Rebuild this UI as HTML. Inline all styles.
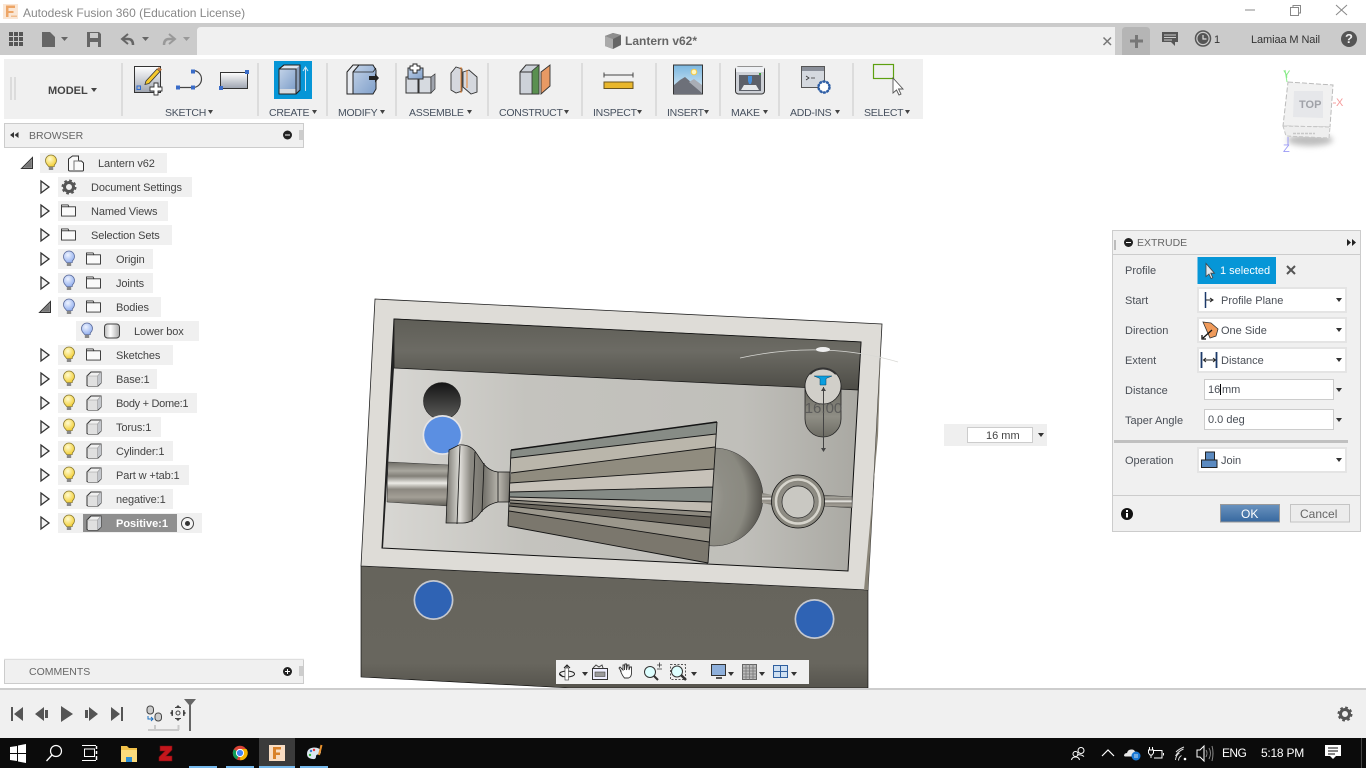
<!DOCTYPE html>
<html><head><meta charset="utf-8"><title>Autodesk Fusion 360</title>
<style>
html,body{margin:0;padding:0;width:1366px;height:768px;overflow:hidden;background:#fff;font-family:"Liberation Sans",sans-serif}
svg.m{position:absolute;left:0;top:0}
.t{position:absolute;white-space:nowrap;font-size:11px;line-height:14px;color:#4a4f57;margin-top:1px}
.tb{color:#46505e;font-size:10.5px;letter-spacing:-.25px}
.b{color:#444;letter-spacing:-.12px}
</style></head><body>
<svg class="m" width="1366" height="768" viewBox="0 0 1366 768" xmlns="http://www.w3.org/2000/svg">
<defs>
<linearGradient id="gW" x1="0" y1="0" x2="0" y2="1"><stop offset="0" stop-color="#fff"/><stop offset="1" stop-color="#9ea4b0"/></linearGradient>
<linearGradient id="gB" x1="0" y1="0" x2="1" y2="1"><stop offset="0" stop-color="#c3d3e8"/><stop offset="1" stop-color="#7f9fca"/></linearGradient>
<linearGradient id="gBk" x1="0" y1="0" x2="0" y2="1"><stop offset="0" stop-color="#5f5e57"/><stop offset=".45" stop-color="#6c6b64"/><stop offset="1" stop-color="#4d4c46"/></linearGradient>
<linearGradient id="gF" x1="0" y1="0" x2="1" y2="0"><stop offset="0" stop-color="#d8d7d3"/><stop offset=".3" stop-color="#c4c3be"/><stop offset=".75" stop-color="#c0bfba"/><stop offset="1" stop-color="#a9a8a2"/></linearGradient>
<linearGradient id="gFr" x1="0" y1="0" x2="0" y2="1"><stop offset="0" stop-color="#66645c"/><stop offset=".8" stop-color="#68665e"/><stop offset="1" stop-color="#56544d"/></linearGradient>
<linearGradient id="gRod" x1="0" y1="0" x2="0" y2="1"><stop offset="0" stop-color="#6f6d66"/><stop offset=".2" stop-color="#a9a79f"/><stop offset=".32" stop-color="#827f78"/><stop offset=".48" stop-color="#ecebe6"/><stop offset=".62" stop-color="#8b8880"/><stop offset=".8" stop-color="#a39f96"/><stop offset="1" stop-color="#5f5d56"/></linearGradient>
<linearGradient id="gFl" x1="0" y1="0" x2="1" y2="0"><stop offset="0" stop-color="#77756e"/><stop offset=".22" stop-color="#dfded9"/><stop offset=".38" stop-color="#8d8b84"/><stop offset=".6" stop-color="#77756e"/><stop offset=".82" stop-color="#b9b6ae"/><stop offset="1" stop-color="#77756e"/></linearGradient>
<radialGradient id="gD" cx=".12" cy=".5" r=".88"><stop offset="0" stop-color="#d0cabb"/><stop offset=".28" stop-color="#a8a69e"/><stop offset=".55" stop-color="#8f8e86"/><stop offset=".8" stop-color="#8a8980"/><stop offset="1" stop-color="#54524c"/></radialGradient>
<linearGradient id="gH" x1="0" y1="0" x2="0" y2="1"><stop offset="0" stop-color="#141414"/><stop offset="1" stop-color="#5e5e5c"/></linearGradient>
<linearGradient id="gC" x1="0" y1="0" x2="0" y2="1"><stop offset="0" stop-color="#66655d"/><stop offset=".6" stop-color="#8f8e85"/><stop offset="1" stop-color="#6c6b63"/></linearGradient>
<linearGradient id="gOK" x1="0" y1="0" x2="0" y2="1"><stop offset="0" stop-color="#6a93bf"/><stop offset="1" stop-color="#37689f"/></linearGradient>
<radialGradient id="gBulbY" cx=".4" cy=".35" r=".7"><stop offset="0" stop-color="#fffbd0"/><stop offset="1" stop-color="#f2cc2e"/></radialGradient>
<radialGradient id="gBulbB" cx=".4" cy=".35" r=".7"><stop offset="0" stop-color="#eef3ff"/><stop offset="1" stop-color="#8fadee"/></radialGradient>
<linearGradient id="gCyl" x1="0" y1="0" x2="1" y2="0"><stop offset="0" stop-color="#bbb"/><stop offset=".4" stop-color="#fff"/><stop offset="1" stop-color="#aaa"/></linearGradient>
<linearGradient id="gSky" x1="0" y1="0" x2="0" y2="1"><stop offset="0" stop-color="#7bb7e0"/><stop offset="1" stop-color="#dfeef7"/></linearGradient>
<filter id="bl" x="-30%" y="-100%" width="160%" height="300%"><feGaussianBlur stdDeviation="3"/></filter>
<symbol id="bulbY" viewBox="0 0 12 16" overflow="visible"><path d="M2.5 10C.8 8.500.5 6.500.5 5.500a5.200 5.200 0 0 1 11 0c0 1.500-.7 3-2.200 4.500v1.500H3.500z" fill="url(#gBulbY)" stroke="#8a7a30" stroke-width=".8"/><path d="M3.800 12h4.400v3H3.800z" fill="#888"/></symbol>
<symbol id="bulbB" viewBox="0 0 12 16" overflow="visible"><path d="M2.500 10C.8 8.500.5 6.500.5 5.500a5.200 5.200 0 0 1 11 0c0 1.500-.7 3-2.200 4.500v1.500H3.500z" fill="url(#gBulbB)" stroke="#5a6a9a" stroke-width=".8"/><path d="M3.800 12h4.400v3H3.800z" fill="#888"/></symbol>
<symbol id="fold" viewBox="0 0 16 14" overflow="visible"><path d="M.5 13V1h7l1 2h7v10z" fill="#fafafa" stroke="#333"/><path d="M.5 3h8" stroke="#333" fill="none"/></symbol>
<symbol id="cube" viewBox="0 0 16 16" overflow="visible"><path d="M1 14.500V5L5 1h10v11l-3 3H2z" fill="#f0f0f0" stroke="#333"/><path d="M1.500 5h10v10H2z" fill="#e0e0e0"/><path d="M11.500 5l3.500-4v11l-3.500 3z" fill="#c4c7cc"/><path d="M1 5h10.500L15 1M11.500 5v10" fill="none" stroke="#999" stroke-width=".6"/></symbol>
<symbol id="tri" viewBox="0 0 10 14" overflow="visible"><path d="M1 1l8 6-8 6z" fill="#f4f4f4" stroke="#333" stroke-width="1.300"/></symbol>
<symbol id="triO" viewBox="0 0 12 12" overflow="visible"><path d="M11.500 .5v11H.5z" fill="#9a9a9a" stroke="#333"/><path d="M10.500 3v7.500H3z" fill="#777"/></symbol>
</defs>

<!-- title bar -->
<rect x="0" y="0" width="1366" height="23" fill="#fff"/>
<rect x="3" y="4" width="15" height="15" fill="#fae6d4"/>
<path d="M6 5.500h9v2.500H8.500v3h5V13h-5v4H6z" fill="#eda566"/><path d="M11 15.500h6v1.500h-6z" fill="#f0bd8f"/>
<path d="M1245 10h10" stroke="#888"/><path d="M1290.500 7.500h8v8h-8z" fill="none" stroke="#888"/><path d="M1293 7V5.500h7.500v7.500H1299" fill="none" stroke="#888"/>
<path d="M1336 5l11 10M1347 5l-11 10" stroke="#888"/>

<!-- tabs -->
<rect x="0" y="23" width="1366" height="32" fill="#cbcbcb"/>
<path d="M197 55V31q0-4 4-4h914v28z" fill="#f0f0f0"/>
<path d="M1122 55V31q0-4 4-4h20q4 0 4 4v24z" fill="#b5b5b5"/>
<path d="M1130 41h13M1136.500 35v13" stroke="#777" stroke-width="3"/>
<path d="M1103.500 37.500l7.500 7.500M1111 37.500l-7.500 7.500" stroke="#777" stroke-width="1.500"/>
<g fill="#555"><rect x="9" y="32" width="4" height="4"/><rect x="14" y="32" width="4" height="4"/><rect x="19" y="32" width="4" height="4"/><rect x="9" y="37" width="4" height="4"/><rect x="14" y="37" width="4" height="4"/><rect x="19" y="37" width="4" height="4"/><rect x="9" y="42" width="4" height="4"/><rect x="14" y="42" width="4" height="4"/><rect x="19" y="42" width="4" height="4"/></g>
<path d="M42 32h8l5 5v10H42z" fill="#666"/><path d="M61 37h7l-3.500 4z" fill="#666"/>
<path d="M87 32h12l2 2v13H87z" fill="#666"/><rect x="90" y="33" width="8" height="5" fill="#cbcbcb"/><rect x="90" y="42" width="8" height="5" fill="#cbcbcb"/>
<path d="M128 34l-6 5 6 5" fill="none" stroke="#666" stroke-width="2"/><path d="M122 39h6q5 0 5 6" fill="none" stroke="#666" stroke-width="2.500"/><path d="M142 37h7l-3.500 4z" fill="#666"/>
<path d="M169 34l6 5-6 5" fill="none" stroke="#999" stroke-width="2"/><path d="M175 39h-6q-5 0-5 6" fill="none" stroke="#999" stroke-width="2.500"/><path d="M183 37h7l-3.500 4z" fill="#999"/>
<path d="M605 36l8-3 8 2v10l-8 4-8-3z" fill="#666"/><path d="M605 36l8 3 8-4-8-2z" fill="#8f8f8f"/><path d="M613 39v10l-8-3V36z" fill="#aaa"/>
<path d="M1162 32h16v10h-3v4l-4-4h-9z" fill="#555"/><path d="M1164 35h12M1164 37.500h12M1164 40h8" stroke="#cbcbcb"/>
<circle cx="1203" cy="38.500" r="7.500" fill="#cbcbcb" stroke="#555" stroke-width="1.500"/><circle cx="1203" cy="38.500" r="5.500" fill="#555"/><path d="M1203 35v4h3.500" fill="none" stroke="#ddd" stroke-width="1.200"/>
<circle cx="1349" cy="39" r="8" fill="#555"/>

<!-- 3D model -->
<polygon points="361,566 868,590 868,688 570,688 361,677" fill="url(#gFr)" stroke="#000" stroke-width=".6"/>
<polygon points="375,299 882,324 868,590 361,566" fill="#dedcd7" stroke="#222" stroke-width=".8"/>
<polygon points="881,342 868,590 864,590 878,436" fill="#8a8578"/>
<polygon points="394,319 861,342 848,571 382,548" fill="url(#gF)" stroke="#111"/>
<polygon points="394,319 861,342 858,390 394,368" fill="url(#gBk)" stroke="#111" stroke-width=".7"/>
<polygon points="394,319 394,368 383,548 382,548" fill="#222"/>
<circle cx="442" cy="401" r="18.500" fill="url(#gH)" stroke="#222" stroke-width=".6"/>
<circle cx="442.500" cy="435" r="20" fill="#e4e4e6"/><circle cx="442.500" cy="435" r="18.300" fill="#5b8fe2"/>
<!-- rod -->
<polygon points="388,462 449,465 448,506 387,502" fill="url(#gRod)" stroke="#333" stroke-width=".5"/>
<!-- flange -->
<path d="M449 450l10-5 q12-1 18 9l6 9q6 8 15 9h12v30h-12q-10 2-17 10-8 11-18 11h-17z" fill="url(#gFl)" stroke="#111" stroke-width=".7"/>
<path d="M460 446l-3 78M475 452l-3 70M484 463l-2 49M498 472v30" stroke="#111" stroke-width=".8" fill="none"/>
<!-- dome -->
<circle cx="714" cy="497" r="49" fill="url(#gD)" stroke="#333" stroke-width=".5"/>
<!-- cone -->
<polygon points="511,450 717,422 716,434 511,458" fill="#878c86"/>
<polygon points="511,458 716,434 715,447 511,473" fill="#bab6ab"/>
<polygon points="511,473 715,447 714,469 510,483" fill="#908c7f"/>
<polygon points="510,483 714,469 713,487 510,492" fill="#c7c2b9"/>
<polygon points="510,492 713,487 712,502 510,497" fill="#848a85"/>
<polygon points="510,497 712,502 711,512 510,500" fill="#c0bbb1"/>
<polygon points="510,500 711,512 711,517 510,503" fill="#8f8b81"/>
<polygon points="510,503 711,517 710,528 509,506" fill="#6a665d"/>
<polygon points="509,506 710,528 709,542 509,511" fill="#9b978c"/>
<polygon points="509,511 709,542 708,563 508,526" fill="#7b776d"/>
<g stroke="#151515" stroke-width=".9" fill="none"><path d="M511 450L717 422M511 458L716 434M511 473L715 447M510 483L714 469M510 492L713 487M510 497L712 502M510 500L711 512M510 503L711 517M509 506L710 528M509 511L709 542M508 526L708 563M511 450L508 526M717 422L708 563"/><path d="M511 450L717 422" stroke-width="1.500"/></g>
<!-- ring -->
<polygon points="762,493 773,495 773,505 762,503" fill="url(#gRod)"/>
<polygon points="823,495 852,497 852,508 823,506" fill="url(#gRod)" stroke="#333" stroke-width=".4"/>
<circle cx="798" cy="501.500" r="26.500" fill="#8a887f" stroke="#111" stroke-width=".8"/>
<circle cx="798" cy="501.500" r="22" fill="none" stroke="#d6d4cc" stroke-width="2.500"/>
<circle cx="798" cy="501.500" r="18" fill="none" stroke="#8e8c84" stroke-width="3"/>
<circle cx="798" cy="502" r="16" fill="#c9c8c2" stroke="#222" stroke-width=".7"/>
<!-- cylinder preview -->
<path d="M805 386v33a18 18 0 0 0 36 0v-33z" fill="url(#gC)" stroke="#222" stroke-width=".8"/>
<circle cx="823" cy="386" r="18" fill="#d1cfc9" stroke="#222" stroke-width=".8"/>
<path d="M810 374a18 18 0 0 1 26 0" stroke="#333" stroke-width="2" fill="none"/>
<path d="M814 376h18l-6 2.500v6.500h-6v-6.500z" fill="#0a9fe0" stroke="#046" stroke-width=".5"/>
<path d="M740 358Q823 340 898 362" fill="none" stroke="#d8d8d4" stroke-width=".7"/>
<ellipse cx="823" cy="349.500" rx="7" ry="2.500" fill="#eee"/>
<path d="M823.500 387v64" stroke="#444"/><path d="M821 391l2.500-4 2.500 4zM821 448l2.500 4 2.500-4z" fill="#444"/>
<text x="823.500" y="413" font-family="Liberation Sans" font-size="15" fill="#555" text-anchor="middle" opacity=".85">16.00</text>
<!-- bottom holes -->
<circle cx="433.500" cy="600" r="20" fill="#c5c8cf"/><circle cx="433.500" cy="600" r="18.300" fill="#2f63b4"/>
<circle cx="814.500" cy="619" r="20" fill="#c5c8cf"/><circle cx="814.500" cy="619" r="18.300" fill="#2f63b4"/>

<!-- toolbar -->
<rect x="4" y="59" width="919" height="60" fill="#f0f0f0"/>
<path d="M11 77v23M15 77v23" stroke="#c8c8c8"/>
<g fill="#dcdcdc"><rect x="121" y="63" width="2" height="53"/><rect x="257" y="63" width="2" height="53"/><rect x="326" y="63" width="2" height="53"/><rect x="395" y="63" width="2" height="53"/><rect x="487" y="63" width="2" height="53"/><rect x="581" y="63" width="2" height="53"/><rect x="655" y="63" width="2" height="53"/><rect x="719" y="63" width="2" height="53"/><rect x="778" y="63" width="2" height="53"/><rect x="852" y="63" width="2" height="53"/></g>
<!-- sketch -->
<rect x="134.500" y="66.500" width="26" height="26" fill="url(#gW)" stroke="#333"/><rect x="137" y="86" width="3.500" height="3.500" fill="none" stroke="#2e6bd0"/>
<path d="M146 81l11-12 3 2.500-11 12-4 1z" fill="#f6c92d" stroke="#333" stroke-width=".8"/><path d="M157 69l2-2 3 2.500-2 2z" fill="#c07a45"/>
<path d="M154 83h4v4h4v4h-4v4h-4v-4h-4v-4h4z" fill="#fff" stroke="#333" stroke-width=".9"/>
<path d="M178 87.500h15a8.500 8.500 0 0 0 0-17" fill="none" stroke="#444" stroke-width="1.200"/>
<g fill="#3a6cc8"><rect x="176" y="85.500" width="4" height="4"/><rect x="191" y="85.500" width="4" height="4"/><rect x="191" y="69.500" width="4" height="4"/></g>
<rect x="220.500" y="72.500" width="27" height="16" fill="url(#gW)" stroke="#333"/><rect x="245" y="70" width="4" height="4" fill="#3a6cc8"/><rect x="219" y="86" width="4" height="4" fill="#3a6cc8"/>
<!-- create -->
<rect x="274" y="61" width="38" height="38" fill="#0696d7"/>
<path d="M279 69l5-4h16v25l-4 4h-17z" fill="#dfe6ef" stroke="#333"/><path d="M279 69h17v20h-17z" fill="url(#gB)"/><path d="M296 69l4-4v25l-4 4z" fill="#8aa0bd"/><path d="M279 89h17v5h-17z" fill="#d5d9df"/><path d="M279 69l5-4h16v25l-4 4h-17zM279 69h17v25" fill="none" stroke="#222"/>
<path d="M305.500 91V68M303 71l2.500-4 2.500 4" stroke="#cfe6f4" fill="none" stroke-width="1"/>
<!-- modify -->
<path d="M347 72l6-7h10v29h-16z" fill="#e8ebf0" stroke="#222"/><path d="M353 72l6-7h14l3 5v19l-3 5h-20z" fill="url(#gB)" stroke="#222"/><path d="M353 72h20l3-4" fill="none" stroke="#222" stroke-width=".8"/>
<path d="M369 76h6v-2.500l4 4.500-4 4.500v-2.500h-6z" fill="#222"/>
<!-- assemble -->
<rect x="406" y="77" width="12" height="16" fill="#d6dae0" stroke="#333"/><rect x="419" y="77" width="12" height="16" fill="#d6dae0" stroke="#333"/><path d="M431 77l4-3v15l-4 4z" fill="#a0a5ae" stroke="#333" stroke-width=".7"/>
<path d="M408 68h15v11h-15z" fill="url(#gB)" stroke="#333"/><path d="M423 68v11" stroke="#333"/>
<path d="M410 66h3v-2h4v2h3v4h-3v3h-4v-3h-3z" fill="#fff" stroke="#222" stroke-width=".9"/>
<path d="M451 73l5-6 6 2v22l-6 2-5-3zM463 72l6-2 8 7v15l-6 2-8-7z" fill="#d5d8de" stroke="#333" stroke-width=".9"/><path d="M461 67v26M467 70v18" stroke="#e87a1e" stroke-width=".9" fill="none"/>
<!-- construct -->
<path d="M520 72l6-7h13v29h-19z" fill="#cdd2d9" stroke="#333"/><path d="M532 71l7-6v29h-7z" fill="#5a9050" stroke="#333" stroke-width=".8"/><path d="M520 72h12" stroke="#333"/>
<path d="M541 72l9-7v21l-9 8z" fill="#e89a64" stroke="#333" stroke-width=".9"/>
<!-- inspect -->
<path d="M604 72.500v5M633 72.500v5M604 75h29" stroke="#444" fill="none"/>
<rect x="604" y="82" width="29" height="6.500" fill="#e9b72c" stroke="#6a5520"/>
<!-- insert -->
<rect x="673.500" y="65" width="29" height="29" fill="url(#gSky)" stroke="#333"/><circle cx="694" cy="72" r="2.800" fill="#fff6c0" stroke="#f2c94c"/>
<path d="M674 94V85l6-5 5-3 7 6 10 10v1z" fill="#6d7079"/><path d="M689 82l5-3 8 6v8z" fill="#a9adb5"/>
<!-- make -->
<rect x="735.500" y="67" width="29" height="27" rx="3" fill="#cdd0d6" stroke="#333"/><rect x="736" y="67" width="28" height="5" fill="#eef0f3"/><rect x="739" y="75" width="22" height="16" fill="#5c6069"/><rect x="759" y="73" width="2" height="2" fill="#3a9a3a"/>
<path d="M748 76h4v5l-1 3h-2l-1-3z" fill="#4a90d9"/><path d="M741 90l3-5h12l3 5z" fill="#e6e8ea"/>
<!-- add-ins -->
<rect x="801.500" y="66.500" width="23" height="21" fill="#d5d9df" stroke="#555"/><rect x="802" y="67" width="22" height="4" fill="#8a8f99"/>
<path d="M806 76l3 2-3 2M811 78h4" stroke="#333" fill="none" stroke-width=".8"/>
<circle cx="824" cy="87" r="5.500" fill="#fff" stroke="#2f5fa6" stroke-width="2.500" stroke-dasharray="2.500 1"/><circle cx="824" cy="87" r="5.500" fill="none" stroke="#2f5fa6" stroke-width="1"/>
<!-- select -->
<rect x="873.500" y="64.500" width="20" height="14" fill="none" stroke="#5da010" stroke-width="1.200"/>
<path d="M893 78v15l3.500-3 2.500 5 2-1-2.500-5h4.500z" fill="#fff" stroke="#555" stroke-width=".9"/>
<!-- drops -->
<g fill="#444"><path d="M91 88h6l-3 4zM208 110h5l-2.500 4zM312 110h5l-2.500 4zM380 110h5l-2.500 4zM467 110h5l-2.500 4zM564 110h5l-2.500 4zM637 110h5l-2.500 4zM704 110h5l-2.500 4zM763 110h5l-2.500 4zM835 110h5l-2.500 4zM905 110h5l-2.500 4z"/></g>

<!-- browser -->
<rect x="4.500" y="123.500" width="299" height="24" fill="#f0f0f0" stroke="#ccc"/>
<path d="M10 135l4-3v6zM14.500 135l4-3v6z" fill="#333"/>
<circle cx="287.500" cy="135" r="4.500" fill="#222"/><path d="M285 135h5" stroke="#fff"/><path d="M300 130v10M302 130v10" stroke="#aaa"/>

<!-- rows -->
<g fill="#f0f0f0">
<rect x="40" y="153" width="127" height="20"/><rect x="58" y="177" width="134" height="20"/><rect x="58" y="201" width="110" height="20"/><rect x="58" y="225" width="114" height="20"/><rect x="58" y="249" width="95" height="20"/><rect x="58" y="273" width="95" height="20"/><rect x="58" y="297" width="103" height="20"/><rect x="76" y="321" width="123" height="20"/><rect x="58" y="345" width="115" height="20"/><rect x="58" y="369" width="99" height="20"/><rect x="58" y="393" width="139" height="20"/><rect x="58" y="417" width="103" height="20"/><rect x="58" y="441" width="115" height="20"/><rect x="58" y="465" width="131" height="20"/><rect x="58" y="489" width="115" height="20"/><rect x="58" y="513" width="144" height="20"/>
</g>
<rect x="83" y="514" width="94" height="18" fill="#8f8f8f"/>
<use href="#triO" x="21" y="157" width="12" height="12"/>
<use href="#triO" x="39" y="301" width="12" height="12"/>
<use href="#tri" x="40" y="180" width="10" height="14"/><use href="#tri" x="40" y="204" width="10" height="14"/><use href="#tri" x="40" y="228" width="10" height="14"/><use href="#tri" x="40" y="252" width="10" height="14"/><use href="#tri" x="40" y="276" width="10" height="14"/><use href="#tri" x="40" y="348" width="10" height="14"/><use href="#tri" x="40" y="372" width="10" height="14"/><use href="#tri" x="40" y="396" width="10" height="14"/><use href="#tri" x="40" y="420" width="10" height="14"/><use href="#tri" x="40" y="444" width="10" height="14"/><use href="#tri" x="40" y="468" width="10" height="14"/><use href="#tri" x="40" y="492" width="10" height="14"/><use href="#tri" x="40" y="516" width="10" height="14"/>
<use href="#bulbY" x="45" y="155" width="12" height="16"/>
<use href="#bulbB" x="63" y="251" width="12" height="16"/><use href="#bulbB" x="63" y="275" width="12" height="16"/><use href="#bulbB" x="63" y="299" width="12" height="16"/><use href="#bulbB" x="81" y="323" width="12" height="16"/>
<use href="#bulbY" x="63" y="347" width="12" height="16"/><use href="#bulbY" x="63" y="371" width="12" height="16"/><use href="#bulbY" x="63" y="395" width="12" height="16"/><use href="#bulbY" x="63" y="419" width="12" height="16"/><use href="#bulbY" x="63" y="443" width="12" height="16"/><use href="#bulbY" x="63" y="467" width="12" height="16"/><use href="#bulbY" x="63" y="491" width="12" height="16"/><use href="#bulbY" x="63" y="515" width="12" height="16"/>
<!-- lantern component icon -->
<path d="M68.500 170v-11l4-3h6v5h3l2 2v7q0 1-1 1H70q-1.500 0-1.500-1z" fill="#fafafa" stroke="#333"/><path d="M74 170v-9h5" fill="none" stroke="#777"/>
<!-- gear -->
<circle cx="69" cy="187" r="4.500" fill="none" stroke="#555" stroke-width="3"/><circle cx="69" cy="187" r="6.500" fill="none" stroke="#555" stroke-width="2" stroke-dasharray="2.700 2.400"/>
<use href="#fold" x="61" y="204" width="15" height="13"/><use href="#fold" x="61" y="228" width="15" height="13"/>
<use href="#fold" x="86" y="252" width="15" height="13"/><use href="#fold" x="86" y="276" width="15" height="13"/><use href="#fold" x="86" y="300" width="15" height="13"/><use href="#fold" x="86" y="348" width="15" height="13"/>
<rect x="104.500" y="324" width="15" height="14" rx="3" fill="url(#gCyl)" stroke="#444"/>
<use href="#cube" x="86" y="371" width="16" height="16"/><use href="#cube" x="86" y="395" width="16" height="16"/><use href="#cube" x="86" y="419" width="16" height="16"/><use href="#cube" x="86" y="443" width="16" height="16"/><use href="#cube" x="86" y="467" width="16" height="16"/><use href="#cube" x="86" y="491" width="16" height="16"/><use href="#cube" x="86" y="515" width="16" height="16"/>
<circle cx="187.500" cy="523.500" r="6" fill="#f4f4f4" stroke="#444"/><circle cx="187.500" cy="523.500" r="2.500" fill="#333"/>

<!-- view cube -->
<ellipse cx="1310" cy="140" rx="23" ry="6" fill="#888" opacity=".55" filter="url(#bl)"/>
<polygon points="1288,82 1333,85 1330,127 1283,126" fill="#f1f1f1" stroke="#bbb" stroke-dasharray="5 2"/>
<polygon points="1283,126 1330,127 1329,138 1286,136" fill="#eeeeee" stroke="#c5c5c5" stroke-dasharray="4 2"/>
<polygon points="1294,91 1323,91 1323,118 1293,117" fill="#e6e7ea"/>
<path d="M1293 133.500h22" stroke="#c8c8c8" stroke-width="1.500" stroke-dasharray="3 1"/>
<path d="M1285 70l2 12" stroke="#8ef08e"/><path d="M1288 137v8" stroke="#9a9af5"/><path d="M1333 103h3" stroke="#f5a0a0"/>

<!-- extrude panel -->
<rect x="1112.500" y="230.500" width="248" height="301" fill="#f0f0f0" stroke="#ccc"/>
<path d="M1112 254.500h249M1112 495.500h249" stroke="#ccc"/>
<path d="M1115 240v10" stroke="#888"/>
<circle cx="1128.500" cy="242.500" r="4.500" fill="#222"/><path d="M1126 242.500h5" stroke="#fff"/>
<path d="M1347 239l4 3.500-4 3.500zM1352 239l4 3.500-4 3.500z" fill="#222"/>
<rect x="1197.500" y="257" width="78.500" height="27" fill="#0696d7"/>
<path d="M1206 263.500v13l3-2.500 2 4.500 1.800-.8-2-4.500h3.700z" fill="#dfe8ee" stroke="#444" stroke-width=".8"/>
<path d="M1287 266l8 8M1295 266l-8 8" stroke="#555" stroke-width="2"/>
<g fill="#fff" stroke="#e4e4e4" stroke-width="2">
<rect x="1198" y="288" width="148" height="24"/><rect x="1198" y="318" width="148" height="24"/><rect x="1198" y="348" width="148" height="24"/><rect x="1198" y="448" width="148" height="24"/>
</g>
<g fill="#fff" stroke="#ccc"><rect x="1204.500" y="379.500" width="129" height="20"/><rect x="1204.500" y="409.500" width="129" height="20"/></g>
<path d="M1220.500 384v11" stroke="#000"/>
<g fill="#333"><path d="M1336 298h6l-3 4zM1336 328h6l-3 4zM1336 358h6l-3 4zM1336 388h6l-3 4zM1336 418h6l-3 4zM1336 458h6l-3 4z"/></g>
<rect x="1114" y="440" width="234" height="3" fill="#c0c0c0"/>
<!-- start icon -->
<path d="M1205.500 292v16" stroke="#1c3a6a" stroke-width="1.500"/><path d="M1206 300h6M1210 298l3 2-3 2" stroke="#222" fill="none"/>
<!-- direction -->
<path d="M1203 322l8 1 7 6-2 7-6 2z" fill="#ef9a5a" stroke="#333" stroke-width=".8"/><path d="M1212 330l-9 8M1202 335v4h4" stroke="#111" stroke-width="1.300" fill="none"/>
<!-- extent -->
<path d="M1201.500 352v16M1216.500 352v16" stroke="#1c3a6a" stroke-width="1.800"/><path d="M1204 360h11M1206 358l-2.500 2 2.500 2M1213 358l2.500 2-2.500 2" stroke="#222" fill="none"/>
<!-- join -->
<rect x="1205.500" y="452" width="9" height="8" fill="#5b8ac0" stroke="#222"/><rect x="1201.500" y="460" width="15.500" height="7.500" fill="#5b8ac0" stroke="#222"/>
<circle cx="1127" cy="514" r="6" fill="#111"/><rect x="1126" y="513" width="2" height="4.500" fill="#fff"/><rect x="1126" y="510" width="2" height="2" fill="#fff"/>
<rect x="1220.500" y="504.500" width="59" height="17.500" fill="url(#gOK)" stroke="#999"/>
<rect x="1290.500" y="504.500" width="59" height="17.500" fill="#ececec" stroke="#c4c4c4"/>

<!-- distance float -->
<rect x="944" y="424" width="103" height="22" fill="#efefef"/><rect x="967.500" y="427.500" width="65" height="15" fill="#fff" stroke="#ccc"/><path d="M1038 433h6l-3 4z" fill="#333"/>

<!-- view toolbar -->
<rect x="556" y="660" width="253" height="24" fill="#f0f0f0"/>
<path d="M567 665v13M564 668l3-3 3 3" stroke="#222" fill="none"/><ellipse cx="567" cy="674" rx="7.500" ry="3" fill="none" stroke="#222"/><path d="M560 674l3 3" stroke="#222"/><rect x="565" y="668" width="3.500" height="12" fill="#fff" stroke="#333" stroke-width=".6"/>
<path d="M582 672h6l-3 4zM691 672h6l-3 4zM728 672h6l-3 4zM759 672h6l-3 4zM791 672h6l-3 4z" fill="#333"/>
<rect x="592.500" y="668.500" width="15" height="11" fill="#eef" stroke="#333"/><rect x="595" y="672" width="10" height="4.500" fill="#9a9a9a" stroke="#444" stroke-width=".6"/><path d="M593 668l3-3 3 2 3-2 1 3" fill="none" stroke="#444"/>
<path d="M621 671l-2-3 1-1 3 3v-5h1.500v5l.5-6h1.500v6l1-5h1.500v5l1-3h1.500v6q0 4-3 5h-4q-2-2-4-7z" fill="#fff" stroke="#333" stroke-width=".9"/>
<circle cx="650" cy="672" r="5.500" fill="#dff" stroke="#333"/><path d="M654 676l4 4" stroke="#333" stroke-width="2"/><path d="M657 665h5M659.500 662.500v5M657 669h5" stroke="#333" fill="none" stroke-width=".8"/>
<rect x="670.500" y="664.500" width="15" height="15" fill="none" stroke="#555" stroke-dasharray="2 1.500"/><circle cx="677" cy="671.500" r="5.500" fill="#dff" stroke="#333"/><path d="M681 675l5 5" stroke="#333" stroke-width="2.500"/>
<rect x="711.500" y="664.500" width="14" height="11" fill="#8eb0dc" stroke="#333"/><path d="M716 678h6" stroke="#555" stroke-width="2"/>
<rect x="742.500" y="664.500" width="14" height="15" fill="#bbb" stroke="#666"/><path d="M742 668h15M742 671h15M742 674h15M742 677h15M746 664v16M749.500 664v16M753 664v16" stroke="#777" stroke-width=".8"/>
<rect x="773.500" y="665.500" width="14" height="12" fill="#cfe0f2" stroke="#2f5f9f"/><path d="M773 671.500h15M780.500 665v13" stroke="#2f5f9f"/>

<!-- comments -->
<rect x="4.500" y="659.500" width="299" height="24" fill="#f0f0f0" stroke="#ccc"/>
<path d="M4 659h300" stroke="#f0f0f0"/>
<circle cx="287.500" cy="671.500" r="4.500" fill="#222"/><path d="M285 671.500h5M287.500 669v5" stroke="#fff"/><path d="M300 666v10M302 666v10" stroke="#aaa"/>

<!-- timeline -->
<rect x="0" y="688" width="1366" height="50" fill="#f0f0f0"/><rect x="0" y="688" width="1366" height="2" fill="#cdcdcd"/>
<g fill="#555">
<rect x="11" y="707" width="2" height="14"/><path d="M23 707v14l-9-7z"/>
<path d="M35 714l9-7v14zM45 710h3v8h-3z"/>
<path d="M61 706l12 8-12 8z"/>
<path d="M85 710h3v8h-3zM89 707l9 7-9 7z"/>
<path d="M111 707l9 7-9 7z"/><rect x="121" y="707" width="2" height="14"/>
</g>
<rect x="147" y="706" width="6.500" height="8" rx="3" fill="#ccc" stroke="#444"/><rect x="155" y="713" width="6.500" height="8" rx="3" fill="#ccc" stroke="#444"/><path d="M148 716v3h5M151 717l2 2-2 2" stroke="#1a6fc0" fill="none"/>
<path d="M148 730h31M155 725v5M178.500 725v5" stroke="#c9c9c9" stroke-width="2" fill="none"/>
<circle cx="178" cy="713" r="2" fill="none" stroke="#444"/><g fill="#444"><path d="M178 705l3 3h-6zM178 721l3-3h-6zM170 713l3-3v6zM186 713l-3-3v6z"/></g>
<path d="M172 710v6M184 710v6M175 707.500h6M175 718.500h6" stroke="#444"/>
<path d="M184 699h12l-5 6v26h-2v-26z" fill="#666"/>
<circle cx="1345" cy="714" r="4.500" fill="none" stroke="#555" stroke-width="3"/><circle cx="1345" cy="714" r="6.500" fill="none" stroke="#555" stroke-width="2" stroke-dasharray="2.700 2.400"/>

<!-- taskbar -->
<rect x="0" y="738" width="1366" height="30" fill="#0b0b0b"/>
<rect x="259" y="738" width="36" height="30" fill="#3b3b3b"/>
<g fill="#76b9ed"><rect x="189" y="766" width="28" height="2"/><rect x="226" y="766" width="28" height="2"/><rect x="259" y="766" width="36" height="2"/><rect x="300" y="766" width="28" height="2"/></g>
<path d="M10 747l7-1v7h-7zM18 745.500l8-1.500v9h-8zM10 754h7v7l-7-1zM18 754h8v9l-8-1.500z" fill="#fff"/>
<circle cx="56" cy="751" r="5.500" fill="none" stroke="#fff" stroke-width="1.200"/><path d="M52 755l-5.500 6" stroke="#fff" stroke-width="1.300"/>
<path d="M82 745.500h14M82 760.500h14M84.500 749h10v7.500h-10z" fill="none" stroke="#fff"/><path d="M96.500 746v3M96.500 751v3M96.500 756v4" stroke="#fff" stroke-width="1.500"/>
<path d="M121 746h6l2 2h8v14h-16z" fill="#f1c14a"/><path d="M121 750h16v12h-16z" fill="#fbdb7c"/><path d="M126 757h6v5h-6z" fill="#2b8fd6"/>
<path d="M160 746h12v4l-6 6h6v5h-13v-4l6-6h-5z" fill="#c4161c" stroke="#7a0c10" stroke-width=".6"/>
<circle cx="240" cy="753" r="7.200" fill="#db4437"/><path d="M240 753l-6.200-3.600a7.200 7.200 0 0 0 3 10.100z" fill="#0f9d58"/><path d="M240 749h6.500a7.200 7.200 0 0 1-6.300 11.200z" fill="#f4b400"/><circle cx="240" cy="753" r="3.600" fill="#4285f4" stroke="#fff" stroke-width="1"/>
<rect x="269" y="745" width="16" height="16" fill="#f9ddc3"/><path d="M273 747h8v2.500h-5v3h4V755h-4v4h-3z" fill="#d9822b"/>
<path d="M307 754q0-6 7-6.500 6 0 7 4 0 3-3 3-2 0-2 2 0 3-3 2.500-6-.5-6-5z" fill="#dbe6f0"/><circle cx="311" cy="751" r="1.200" fill="#3a7fd0"/><circle cx="314" cy="750" r="1.200" fill="#e33"/><circle cx="310" cy="755" r="1.200" fill="#3b3"/><path d="M319 755l2.500-10" stroke="#e8912d" stroke-width="2"/>
<circle cx="1081" cy="750.500" r="3" fill="none" stroke="#fff"/><circle cx="1075.500" cy="754" r="2.500" fill="none" stroke="#fff"/><path d="M1071.500 760q.5-3 4-3t4 3M1077 755q4-1 7 1.500" fill="none" stroke="#fff"/>
<path d="M1102 756l6-6 6 6" fill="none" stroke="#fff" stroke-width="1.200"/>
<path d="M1124 756q0-3 3-3 1-4 5-3.500 2 0 3 2 3 0 3 3 0 2-2 2h-10q-2 0-2-1z" fill="#e8e8e8"/><circle cx="1136" cy="756" r="4.500" fill="#1a78d4"/><path d="M1134 755h4M1134 757h4" stroke="#fff" stroke-width=".8"/>
<path d="M1149.500 747v3M1152.500 747v3M1148.500 750h5v3l-1.500 2h-2l-1.500-2z" fill="none" stroke="#fff"/><path d="M1151 755v3" stroke="#fff"/><path d="M1154 750.500h8v7.500h-8" fill="none" stroke="#fff"/><path d="M1163.500 753v2.500" stroke="#fff"/>
<path d="M1175.500 760q.5-5 4-7M1178.500 760.500q0-3 3-5M1175.500 756q3-5 8-7M1176 752q3-3 8-5" fill="none" stroke="#ddd"/><circle cx="1185" cy="759" r="1.300" fill="#fff"/>
<path d="M1197 750h3l4-4v15l-4-4h-3z" fill="none" stroke="#fff"/><path d="M1206 750q2 3 0 7M1209 748q3 5 0 11M1212 746q2 7 0 15" fill="none" stroke="#888"/>
<path d="M1325 745h16v11h-5l-3 3-3-3h-5z" fill="#fff"/><path d="M1328 748h10M1328 751h10M1328 754h7" stroke="#0b0b0b"/>
<path d="M1361.500 738v30" stroke="#444"/>
</svg>

<span class="t" style="left:23px;top:5px;font-size:12px;color:#888">Autodesk Fusion 360 (Education License)</span>
<span class="t" style="left:625px;top:33px;font-size:12px;font-weight:bold;color:#666">Lantern v62*</span>
<span class="t" style="left:1214px;top:32px;color:#333">1</span>
<span class="t" style="left:1251px;top:32px;color:#333;letter-spacing:-.1px">Lamiaa M Nail</span>
<span class="t" style="left:1345px;top:31px;font-size:13px;font-weight:bold;color:#eee">?</span>

<span class="t" style="left:48px;top:83px;font-weight:bold;color:#444">MODEL</span>
<span class="t tb" style="left:165px;top:105px">SKETCH</span>
<span class="t tb" style="left:269px;top:105px">CREATE</span>
<span class="t tb" style="left:338px;top:105px">MODIFY</span>
<span class="t tb" style="left:409px;top:105px">ASSEMBLE</span>
<span class="t tb" style="left:499px;top:105px">CONSTRUCT</span>
<span class="t tb" style="left:593px;top:105px">INSPECT</span>
<span class="t tb" style="left:667px;top:105px">INSERT</span>
<span class="t tb" style="left:731px;top:105px">MAKE</span>
<span class="t tb" style="left:790px;top:105px">ADD-INS</span>
<span class="t tb" style="left:864px;top:105px">SELECT</span>

<span class="t" style="left:29px;top:128px;font-size:10.500px;color:#666">BROWSER</span>
<span class="t" style="left:29px;top:664px;font-size:10.500px;color:#666">COMMENTS</span>

<span class="t b" style="left:98px;top:156px">Lantern v62</span>
<span class="t b" style="left:91px;top:180px">Document Settings</span>
<span class="t b" style="left:91px;top:204px">Named Views</span>
<span class="t b" style="left:91px;top:228px">Selection Sets</span>
<span class="t b" style="left:116px;top:252px">Origin</span>
<span class="t b" style="left:116px;top:276px">Joints</span>
<span class="t b" style="left:116px;top:300px">Bodies</span>
<span class="t b" style="left:134px;top:324px">Lower box</span>
<span class="t b" style="left:116px;top:348px">Sketches</span>
<span class="t b" style="left:116px;top:372px">Base:1</span>
<span class="t b" style="left:116px;top:396px;letter-spacing:-.3px">Body + Dome:1</span>
<span class="t b" style="left:116px;top:420px">Torus:1</span>
<span class="t b" style="left:116px;top:444px">Cylinder:1</span>
<span class="t b" style="left:116px;top:468px">Part w +tab:1</span>
<span class="t b" style="left:116px;top:492px">negative:1</span>
<span class="t" style="left:116px;top:516px;font-weight:bold;color:#fff">Positive:1</span>

<span class="t" style="left:1299px;top:97px;font-size:11px;font-weight:bold;color:#a0a2a8">TOP</span>
<span class="t" style="left:1336px;top:95px;font-size:11px;color:#f59a9a">X</span>
<span class="t" style="left:1283px;top:67px;font-size:11px;color:#86e886">Y</span>
<span class="t" style="left:1283px;top:141px;font-size:11px;color:#9a9af5">Z</span>

<span class="t" style="left:1137px;top:235px;color:#666;font-size:10.500px">EXTRUDE</span>
<span class="t" style="left:1125px;top:263px">Profile</span>
<span class="t" style="left:1125px;top:293px">Start</span>
<span class="t" style="left:1125px;top:323px">Direction</span>
<span class="t" style="left:1125px;top:353px">Extent</span>
<span class="t" style="left:1125px;top:383px">Distance</span>
<span class="t" style="left:1125px;top:413px">Taper Angle</span>
<span class="t" style="left:1125px;top:453px">Operation</span>
<span class="t" style="left:1220px;top:263px;color:#fff">1 selected</span>
<span class="t" style="left:1221px;top:293px">Profile Plane</span>
<span class="t" style="left:1221px;top:323px">One Side</span>
<span class="t" style="left:1221px;top:353px">Distance</span>
<span class="t" style="left:1208px;top:382px">16</span>
<span class="t" style="left:1222px;top:382px">mm</span>
<span class="t" style="left:1208px;top:412px">0.0 deg</span>
<span class="t" style="left:1221px;top:453px">Join</span>
<span class="t" style="left:1241px;top:506px;font-size:12px;color:#fff">OK</span>
<span class="t" style="left:1300px;top:506px;font-size:12px;color:#666">Cancel</span>
<span class="t" style="left:986px;top:428px;color:#444">16 mm</span>

<span class="t" style="left:1222px;top:745px;font-size:12px;color:#fff;letter-spacing:-.6px">ENG</span>
<span class="t" style="left:1261px;top:745px;font-size:12px;color:#fff;letter-spacing:-.25px">5:18 PM</span>
</body></html>
